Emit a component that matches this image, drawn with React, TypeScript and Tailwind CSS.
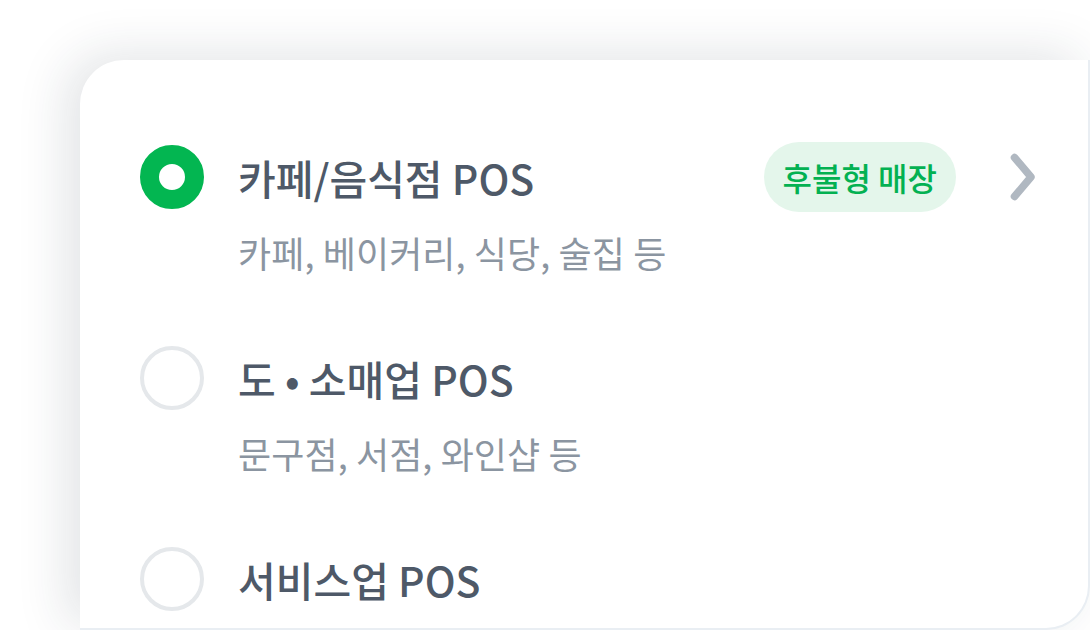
import { ReactNode } from "react";

const FONT = { fontFamily: '"Noto Sans CJK KR", "Noto Sans", sans-serif' };

type PosOption = {
  title: string;
  desc?: string;
  selected?: boolean;
  badge?: string;
};

const options: PosOption[] = [
  {
    title: "카페/음식점 POS",
    desc: "카페, 베이커리, 식당, 술집 등",
    selected: true,
    badge: "후불형 매장",
  },
  { title: "도 • 소매업 POS", desc: "문구점, 서점, 와인샵 등" },
  { title: "서비스업 POS" },
];

function Radio({ checked }: { checked?: boolean }) {
  return checked ? (
    <div className="w-16 h-16 shrink-0 rounded-full border-[19px] border-[#03b651] bg-white" />
  ) : (
    <div className="w-16 h-16 shrink-0 rounded-full border-[4px] border-[#e5e8eb] bg-white" />
  );
}

function Chevron() {
  return (
    <svg width="26" height="48" viewBox="0 0 26 48" fill="none">
      <path
        d="M4.5 4.5 L21 24 L4.5 43.5"
        stroke="#b0b8c1"
        strokeWidth="7.5"
        strokeLinecap="round"
        strokeLinejoin="round"
      />
    </svg>
  );
}

function Row({ option }: { option: PosOption }) {
  let right: ReactNode = null;
  if (option.badge) {
    right = (
      <div className="flex items-center gap-[54px]">
        <span className="h-[70px] px-[19px] rounded-full bg-[#e4f6eb] text-[#03b152] text-[32px] font-medium leading-[70px]">
          {option.badge}
        </span>
        <Chevron />
      </div>
    );
  }

  return (
    <div className="flex items-start gap-[34px]">
      <Radio checked={option.selected} />
      <div className="flex-1 flex flex-col">
        <div className="flex items-center justify-between h-16">
          <span className="text-[41px] leading-[64px] font-medium text-[#4e5968]">
            {option.title}
          </span>
          {right}
        </div>
        {option.desc && (
          <span className="mt-[19px] text-[36px] leading-[48px] text-[#8b95a1] tracking-[0.1px]">
            {option.desc}
          </span>
        )}
      </div>
    </div>
  );
}

export default function App() {
  return (
    <div
      className="w-[1090px] h-[630px] overflow-hidden bg-white pl-[80px] pt-[60px]"
      style={FONT}
    >
      <div className="w-[1010px] h-[570px] bg-white rounded-tl-[44px] rounded-br-[44px] border-r-2 border-b-2 border-[#e9eef3] shadow-[-14px_-6px_50px_rgba(30,45,60,0.13)] pl-[60px] pr-[52px] pt-[85px] flex flex-col gap-[70px]">
        {options.map((o) => (
          <Row key={o.title} option={o} />
        ))}
      </div>
    </div>
  );
}
